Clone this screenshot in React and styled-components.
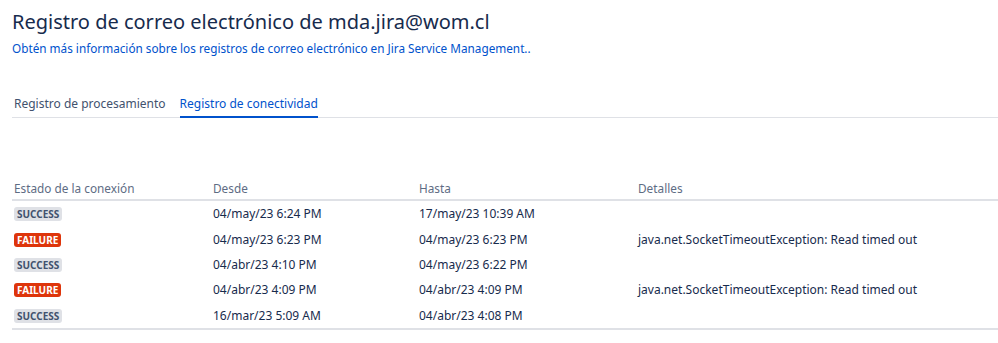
import React from 'react';
import styled, { createGlobalStyle } from 'styled-components';

const Global = createGlobalStyle`
  body {
    margin: 0;
    background: #ffffff;
    font-family: "Segoe UI", "Noto Sans", sans-serif;
    color: #172b4d;
  }
`;

const Page = styled.div`
  padding: 6px 0 0 12px;
  width: 986px;
`;

const Title = styled.h1`
  margin: 0;
  font-size: 20px;
  font-weight: 400;
  line-height: 32px;
  color: #172b4d;
`;

const LearnLink = styled.a`
  display: block;
  margin-top: 1px;
  font-size: 11.75px;
  line-height: 18px;
  color: #0052cc;
  text-decoration: none;
`;

const Tabs = styled.div`
  display: flex;
  gap: 14px;
  margin-top: 35px;
  padding-left: 2px;
  border-bottom: 1px solid #dfe1e6;
`;

const Tab = styled.div`
  font-size: 12px;
  line-height: 18px;
  padding: 3px 0 3px;
  color: ${p => (p.$active ? '#0052cc' : '#42526e')};
  border-bottom: 2px solid ${p => (p.$active ? '#0052cc' : 'transparent')};
  margin-bottom: -1px;
`;

const Table = styled.table`
  margin-top: 62px;
  width: 100%;
  table-layout: fixed;
  border-collapse: collapse;
  font-size: 12px;
`;

const Th = styled.th`
  text-align: left;
  font-weight: 400;
  color: #5e6c84;
  font-size: 11.8px;
  padding: 0 2px 3px;
  border-bottom: 2px solid #dfe1e6;
  width: ${p => p.$w || 'auto'};
`;

const Body = styled.tbody`
  border-bottom: 2px solid #dfe1e6;
`;

const Td = styled.td`
  padding: 0 2px;
  height: 25.4px;
  color: #172b4d;
  vertical-align: middle;
`;

const Lozenge = styled.span`
  display: inline-block;
  font-size: 10px;
  font-weight: 700;
  line-height: 14px;
  padding: 0 3px;
  border-radius: 3px;
  text-transform: uppercase;
  background: ${p => (p.$fail ? '#de350b' : '#dfe1e6')};
  color: ${p => (p.$fail ? '#ffffff' : '#42526e')};
`;

const rows = [
  { ok: true, from: '04/may/23 6:24 PM', to: '17/may/23 10:39 AM', info: '' },
  { ok: false, from: '04/may/23 6:23 PM', to: '04/may/23 6:23 PM', info: 'java.net.SocketTimeoutException: Read timed out' },
  { ok: true, from: '04/abr/23 4:10 PM', to: '04/may/23 6:22 PM', info: '' },
  { ok: false, from: '04/abr/23 4:09 PM', to: '04/abr/23 4:09 PM', info: 'java.net.SocketTimeoutException: Read timed out' },
  { ok: true, from: '16/mar/23 5:09 AM', to: '04/abr/23 4:08 PM', info: '' },
];

export default function App() {
  return (
    <Page>
      <Global />
      <Title>Registro de correo electrónico de mda.jira@wom.cl</Title>
      <LearnLink href="#">Obtén más información sobre los registros de correo electrónico en Jira Service Management..</LearnLink>
      <Tabs>
        <Tab>Registro de procesamiento</Tab>
        <Tab $active>Registro de conectividad</Tab>
      </Tabs>
      <Table>
        <thead>
          <tr>
            <Th $w="195px">Estado de la conexión</Th>
            <Th $w="202px">Desde</Th>
            <Th $w="215px">Hasta</Th>
            <Th>Detalles</Th>
          </tr>
        </thead>
        <Body>
          {rows.map((r, i) => (
            <tr key={i}>
              <Td>
                <Lozenge $fail={!r.ok}>{r.ok ? 'Success' : 'Failure'}</Lozenge>
              </Td>
              <Td>{r.from}</Td>
              <Td>{r.to}</Td>
              <Td>{r.info}</Td>
            </tr>
          ))}
        </Body>
      </Table>
    </Page>
  );
}
